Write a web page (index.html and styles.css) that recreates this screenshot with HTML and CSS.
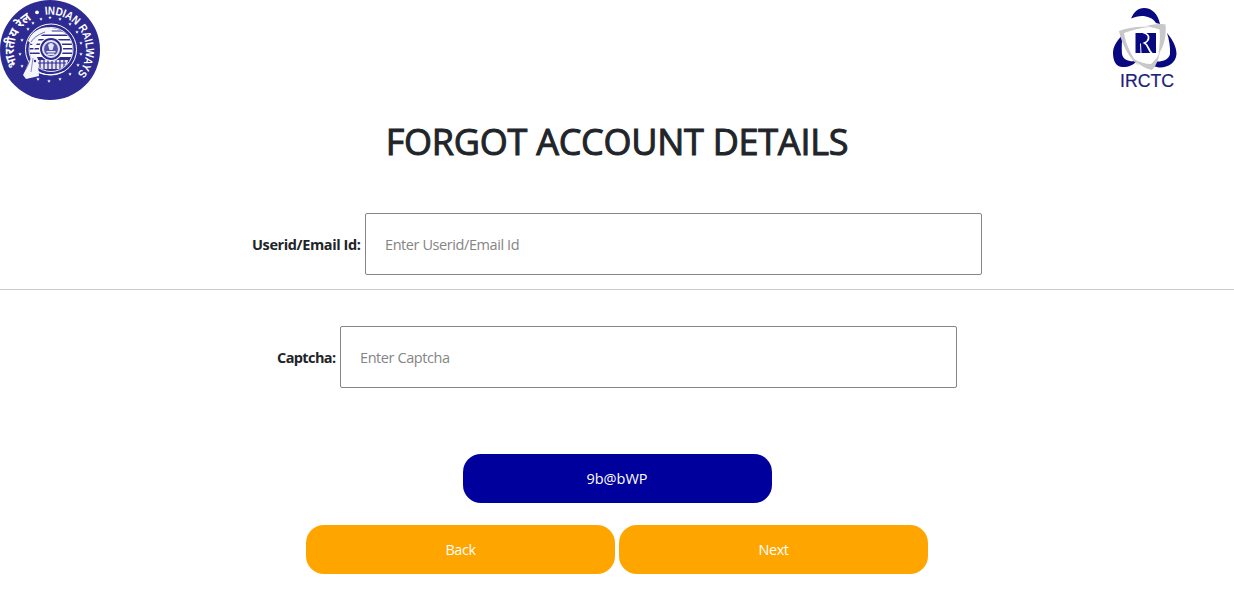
FILE: index.html
```html
<!DOCTYPE html>
<html lang="en">
<head>
<meta charset="utf-8">
<title>Forgot Account Details</title>
<link rel="stylesheet" href="styles.css">
</head>
<body>
<header class="header">
  <svg class="railways" viewBox="0 0 100 100" role="img" aria-label="Indian Railways">
    <defs>
      <path id="ring" d="M50 86.500A36 36 0 0 1 50 14.500A36 36 0 0 1 50 86.500"/>
      <path id="star" d="M0-1.800L.5-.5 1.800-.5.700.4 1.100 1.700 0 .8-1.100 1.700-.7.4-1.800-.5-.5-.5Z"/>
      <clipPath id="disc"><circle cx="51" cy="49.500" r="21.500"/></clipPath>
    </defs>
    <circle cx="50" cy="50" r="50" fill="#2d2b91"/>
    <g fill="#fff">
      <text class="ring-text hindi"><textPath href="#ring" startOffset="40" textLength="54" lengthAdjust="spacingAndGlyphs">भारतीय रेल</textPath></text>
      <text class="ring-text"><textPath href="#ring" startOffset="108" textLength="87" lengthAdjust="spacingAndGlyphs">INDIAN RAILWAYS</textPath></text>
      <circle cx="37" cy="12.300" r="1.900"/>
      <use href="#star" x="28" y="29"/><use href="#star" x="33" y="23"/><use href="#star" x="41" y="19"/><use href="#star" x="50" y="17.500"/><use href="#star" x="60" y="19"/><use href="#star" x="70" y="24"/><use href="#star" x="77" y="32"/><use href="#star" x="81" y="43"/><use href="#star" x="81" y="54"/><use href="#star" x="78" y="65"/><use href="#star" x="70" y="74"/><use href="#star" x="60" y="79"/><use href="#star" x="49" y="81"/><use href="#star" x="38" y="79"/><use href="#star" x="22" y="66"/><use href="#star" x="20" y="54"/><use href="#star" x="22" y="40"/>
    </g>
    <circle cx="51" cy="49.500" r="25.500" fill="#2d2b91" stroke="#fff" stroke-width="1"/>
    <g clip-path="url(#disc)">
      <path d="M28 29h46M28 33h46M28 37.500h46M28 42h46M28 46.500h46M28 51h46M28 55.500h46" stroke="#fff" stroke-width="3.100"/>
      <path d="M37 60h31l-2 9H37z" fill="#e6e5f5"/>
      <path d="M37 63h29M40 60v10M44 60v10M48 60v10M52 60v10M56 60v10M60 60v10M64 60v10" stroke="#2d2b91" stroke-width="1.200"/>
    </g>
    <circle cx="51" cy="49.500" r="22" fill="none" stroke="#fff" stroke-width=".9"/>
    <circle cx="51" cy="49" r="11.500" fill="#2d2b91" stroke="#fff" stroke-width="1.200"/>
    <circle cx="51" cy="49" r="8.500" fill="#dddcf0" stroke="#fff" stroke-width=".8"/>
    <circle cx="51" cy="49" r="7" fill="#5452a8"/>
    <path d="M48 45q3-4 6 0l-1.500 5h-3zM46.500 51h9v1.500h-9zM48 53.500h6l1 1.500h-8z" fill="#e6e5f5"/>
    <path d="M28 41C31 33 38 28 45 27.500c4 0 7 2 7 4.500-6 0-10 2-13 6l-4 10-3 6c5 1 7 5 6 10l1 12-13 3-3-4 6-12 3-8 2-9z" fill="#f4f4fb"/>
    <path d="M31 42c4-6 9-8 14-10" fill="none" stroke="#2d2b91" stroke-width=".7"/>
    <path d="M30 60l-4 9M33 58l-2 14" fill="none" stroke="#8180c5" stroke-width=".9"/>
    <circle cx="35" cy="61" r="1.200" fill="#2d2b91"/>
    <path d="M38 72.500q12 5 26-1" fill="none" stroke="#fff" stroke-width="1"/>
  </svg>
  <svg class="irctc" viewBox="0 0 90 96" role="img" aria-label="IRCTC">
    <g fill="#080880">
      <path d="M31 18.500C34 12 38 8 44 8c8 0 14 6 16 16l-4-1c-3-5-9-7-14-7-4 0-7 1-11 2.500z"/>
      <path d="M22.500 35c-6 6-9.500 12-9.500 18 0 8 3 14 10 14 6 0 10-2 14-6-8 1-14-1-15-7-.6-7 0-13 .5-19z"/>
      <path d="M67 33c6 7 9.500 14 9.500 21-.5 9-9 14-17.500 13.500L53 66l4-4.500c7 0 12-2.500 13-7.500.5-7-1-15-3-21z"/>
      <path d="M35.500 33H56v20H35.500z"/>
    </g>
    <path d="M43 32.500c4 1 6 3 5.500 6-.3 2.500-2 3.500-4 4.500 4 2 3.500 7 7.500 10.500" fill="none" stroke="#fff" stroke-width="1.800"/>
    <path d="M40.500 43.500l.5 10" stroke="#fff" stroke-width="1"/>
    <g fill="#c8c8ca">
      <path d="M19 31c8-3 18-5 30-4-9 1-17 3-25 6 2 12 7 22 15 33C29 58 22 45 19 31z"/>
      <path d="M45 26.500c6-2 13-3 20.500-2 1 11-1 21-7 30 1-8 2-17 1-25-4-1-8-3-14.500-3z"/>
      <path d="M32 58c7 4 13 6 19 6 5-5 8-8 9-14-1 8-3 15-8 20-8-2-14-6-20-12z"/>
    </g>
    <text x="20" y="86.500" textLength="54" lengthAdjust="spacingAndGlyphs" class="irctc-text">IRCTC</text>
  </svg>
</header>
<main class="main">
  <h1 class="title">FORGOT ACCOUNT DETAILS</h1>
  <form class="form">
    <div class="field"><label class="label label-user" for="user">Userid/Email Id:</label><input class="input" id="user" type="text" placeholder="Enter Userid/Email Id"></div>
    <hr class="rule">
    <div class="field"><label class="label label-captcha" for="captcha">Captcha:</label><input class="input" id="captcha" type="text" placeholder="Enter Captcha"></div>
    <div class="code"><button class="button button-code" type="button">9b@bWP</button></div>
    <div class="actions"><button class="button" type="button">Back</button><button class="button" type="button">Next</button></div>
  </form>
</main>
</body>
</html>
```
FILE: styles.css
```css
* { box-sizing: border-box; }

body {
  margin: 0;
  background: #fff;
  color: #212529;
  font: 14.5px/22px "Open Sans", "Noto Sans", sans-serif;
}

.header {
  display: flex;
  justify-content: space-between;
  height: 100px;
  padding-right: 44px;
}

.railways { width: 100px; height: 100px; }
.irctc { width: 90px; height: 96px; }

.ring-text { font: 700 11.5px "Liberation Sans", sans-serif; }
.hindi { font-family: "Noto Sans", "Noto Sans Devanagari", sans-serif; font-size: 13px; }
.irctc-text { font: 18px "Liberation Sans", sans-serif; fill: #202078; stroke: #202078; stroke-width: .2px; }

.title {
  margin: 20px 0 49px;
  font-size: 36px;
  font-weight: 500;
  line-height: 44px;
  letter-spacing: -.26px;
  text-align: center;
  -webkit-text-stroke: 1px #212529;
}

.field {
  display: flex;
  align-items: center;
  justify-content: center;
  gap: 4px;
}

.label { padding-top: 1px; font-weight: 700; white-space: nowrap; }
.label-user { width: 109px; letter-spacing: -.39px; }
.label-captcha { width: 59px; letter-spacing: -.6px; }

.input {
  width: 617px;
  height: 62px;
  padding: 0 19px;
  border: 1px solid #858585;
  border-radius: 2px;
  font: inherit;
  letter-spacing: -.42px;
}

.input::placeholder { color: #858585; opacity: 1; }

.rule {
  margin: 14px 0 36px;
  border: 0;
  border-top: 1px solid #ccc;
}

.code {
  display: flex;
  justify-content: center;
  margin: 66px 0 22px;
}

.actions {
  display: flex;
  justify-content: center;
  gap: 4px;
}

.button {
  width: 309px;
  height: 49px;
  padding: 0;
  border: 0;
  border-radius: 18px;
  background: #ffa500;
  color: #fff;
  font: inherit;
  letter-spacing: -.45px;
}

.button-code { background: #00009c; letter-spacing: 0; }
```
